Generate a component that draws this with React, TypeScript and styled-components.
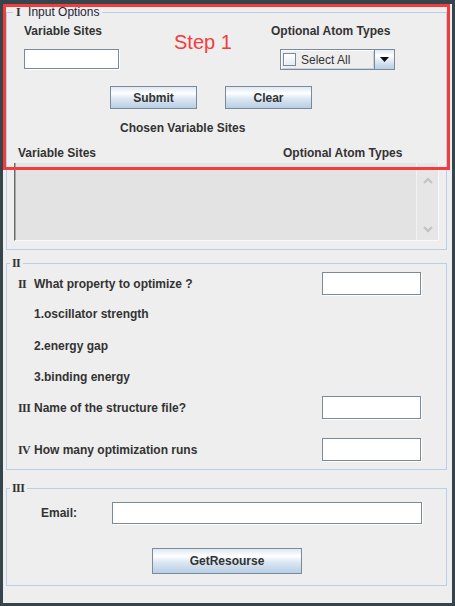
import React from "react";
import styled, { createGlobalStyle } from "styled-components";

const GlobalStyle = createGlobalStyle`
  html, body { margin: 0; padding: 0; background: #36444c; }
  body { font-family: "Liberation Sans", Arial, sans-serif; }
  * { box-sizing: border-box; }
`;

const Frame = styled.div`
  position: relative;
  width: 455px;
  height: 606px;
  padding: 4px 3px 3px 3px;
  background: #36444c;
`;

const Content = styled.div`
  width: 449px;
  height: 599px;
  background: #eeeeee;
  display: flex;
  flex-direction: column;
  padding: 1px 0 0 3px;
`;

const Panel = styled.fieldset<{ $mt: number; $pb: number }>`
  margin: ${(p) => p.$mt}px 0 0 0;
  padding: 0 0 ${(p) => p.$pb}px 0;
  width: 441px;
  min-width: 0;
  border: 1px solid #b8cfe5;
  display: flex;
  flex-direction: column;
`;

const Legend = styled.legend<{ $offset: number; $padLeft: number }>`
  height: 14px;
  margin-left: ${(p) => p.$offset}px;
  padding: 0 3px 0 ${(p) => p.$padLeft}px;
  font: 12px/14px "Liberation Sans", Arial, sans-serif;
  color: #24243a;
  white-space: nowrap;
`;

const Numeral = styled.span<{ $gap?: number }>`
  display: inline-block;
  vertical-align: top;
  height: 14px;
  font: bold 12px/14px "Liberation Serif", "Times New Roman", serif;
  letter-spacing: -0.6px;
  color: #333;
  margin-right: ${(p) => p.$gap ?? 0}px;
`;

const Label = styled.div<{ $indent?: number; $mt?: number }>`
  font: bold 12px/14px "Liberation Sans", Arial, sans-serif;
  color: #333;
  white-space: nowrap;
  padding-left: ${(p) => p.$indent ?? 0}px;
  margin-top: ${(p) => p.$mt ?? 0}px;
`;

const TextField = styled.input<{ $w: number; $h: number }>`
  width: ${(p) => p.$w}px;
  height: ${(p) => p.$h}px;
  margin: 0;
  padding: 0 3px;
  border: 1px solid #7a8a99;
  box-shadow: 1px 1px 0 #ffffff;
  background: #ffffff;
  outline: none;
  font: 12px "Liberation Sans", Arial, sans-serif;
`;

const MetalButton = styled.button<{ $w: number; $h: number }>`
  width: ${(p) => p.$w}px;
  height: ${(p) => p.$h}px;
  margin: 0;
  padding: 0;
  border: 1px solid #7a8a99;
  background: linear-gradient(
    to bottom,
    #dde8f3 0%,
    #ffffff 30%,
    #dce7f2 55%,
    #c4d6e9 85%,
    #b8cfe5 100%
  );
  font: bold 12px/14px "Liberation Sans", Arial, sans-serif;
  color: #333;
  cursor: pointer;
`;

/* ---------- Panel I ---------- */

const TopRow = styled.div`
  display: flex;
  align-items: flex-start;
  margin-top: 5px;
`;

const Column = styled.div<{ $ml: number; $w?: number }>`
  display: flex;
  flex-direction: column;
  margin-left: ${(p) => p.$ml}px;
  width: ${(p) => (p.$w ? `${p.$w}px` : "auto")};
`;

const FieldSlot = styled.div<{ $ml?: number }>`
  margin-top: 11px;
  margin-left: ${(p) => p.$ml ?? 0}px;
  display: flex;
`;

const StepLabel = styled.div`
  width: 97px;
  margin-top: 6px;
  font: 20px/24px "Liberation Sans", Arial, sans-serif;
  color: #f43c3c;
  white-space: nowrap;
`;

const Combo = styled.div`
  width: 115px;
  height: 21px;
  display: flex;
  border: 1px solid #7a8a99;
  background: #eeeeee;
`;

const ComboBody = styled.div`
  flex: 1;
  display: flex;
  align-items: center;
  padding-left: 2px;
  box-shadow: inset 1px 1px 0 #ffffff, inset -1px -1px 0 #c9d3dd;
`;

const CheckBox = styled.span`
  width: 13px;
  height: 13px;
  border: 1px solid #7a8a99;
  background: linear-gradient(to bottom, #ffffff 0%, #e4ecf4 100%);
  box-shadow: inset 1px 1px 0 #ffffff;
`;

const ComboText = styled.span`
  margin-left: 5px;
  font: 12px/14px "Liberation Sans", Arial, sans-serif;
  color: #333;
`;

const ComboArrow = styled.div`
  width: 20px;
  border-left: 1px solid #7a8a99;
  display: flex;
  align-items: center;
  justify-content: center;
  background: linear-gradient(to bottom, #dde8f3 0%, #ffffff 30%, #c4d6e9 85%, #b8cfe5 100%);
`;

const ButtonRow = styled.div<{ $mt: number; $pl: number; $gap?: number }>`
  display: flex;
  gap: ${(p) => p.$gap ?? 0}px;
  margin-top: ${(p) => p.$mt}px;
  padding-left: ${(p) => p.$pl}px;
`;

const SplitLabels = styled.div`
  display: grid;
  grid-template-columns: 265px auto;
  margin-top: 11px;
  padding-left: 11px;
`;

const ScrollPane = styled.div`
  display: flex;
  margin: 3px 0 0 7px;
  width: 425px;
  height: 78px;
  background: #e3e3e3;
  border-left: 1px solid #6a6a6a;
  border-right: 1px solid #f8f8f8;
  border-bottom: 1px solid #f8f8f8;
  box-shadow: inset 1px 0 0 #a8a8a8;
`;

const ScrollBody = styled.div`
  flex: 1;
`;

const ScrollBar = styled.div`
  width: 22px;
  display: flex;
  flex-direction: column;
  align-items: center;
  justify-content: space-between;
  padding: 14px 0 7px;
  background: #e6e6e6;
  border-left: 1px solid #f2f2f2;
`;

/* ---------- Panel II ---------- */

const QuestionRow = styled.div<{ $mt: number }>`
  display: grid;
  grid-template-columns: 16px 288px 99px;
  align-items: center;
  height: 23px;
  margin-top: ${(p) => p.$mt}px;
  padding-left: 11px;
`;

/* ---------- Panel III ---------- */

const EmailRow = styled.div`
  display: grid;
  grid-template-columns: 71px 310px;
  align-items: center;
  height: 22px;
  margin-top: 7px;
  padding-left: 34px;
`;

const RedOutline = styled.div`
  position: absolute;
  left: 3px;
  top: 4px;
  width: 447px;
  height: 166px;
  border: 3px solid #f43c3c;
  pointer-events: none;
`;

const Chevron = ({ up }: { up?: boolean }) => (
  <svg width="10" height="7" viewBox="0 0 10 7">
    <path
      d={up ? "M1 6 L5 2 L9 6" : "M1 1 L5 5 L9 1"}
      fill="none"
      stroke="#c2c2c2"
      strokeWidth="2"
    />
  </svg>
);

export default function App() {
  return (
    <>
      <GlobalStyle />
      <Frame>
        <Content>
          <Panel $mt={0} $pb={8}>
            <Legend $offset={6} $padLeft={3}>
              <Numeral $gap={8}>I</Numeral>Input Options
            </Legend>
            <TopRow>
              <Column $ml={17} $w={150}>
                <Label>Variable Sites</Label>
                <FieldSlot>
                  <TextField $w={95} $h={20} />
                </FieldSlot>
              </Column>
              <StepLabel>Step 1</StepLabel>
              <Column $ml={0}>
                <Label>Optional Atom Types</Label>
                <FieldSlot $ml={9}>
                  <Combo>
                    <ComboBody>
                      <CheckBox />
                      <ComboText>Select All</ComboText>
                    </ComboBody>
                    <ComboArrow>
                      <svg width="9" height="5" viewBox="0 0 9 5">
                        <path d="M0 0 H9 L4.5 5 Z" fill="#111" />
                      </svg>
                    </ComboArrow>
                  </Combo>
                </FieldSlot>
              </Column>
            </TopRow>
            <ButtonRow $mt={16} $pl={103} $gap={28}>
              <MetalButton $w={87} $h={23}>Submit</MetalButton>
              <MetalButton $w={87} $h={23}>Clear</MetalButton>
            </ButtonRow>
            <Label $indent={113} $mt={12}>
              Chosen Variable Sites
            </Label>
            <SplitLabels>
              <Label>Variable Sites</Label>
              <Label>Optional Atom Types</Label>
            </SplitLabels>
            <ScrollPane>
              <ScrollBody />
              <ScrollBar>
                <Chevron up />
                <Chevron />
              </ScrollBar>
            </ScrollPane>
          </Panel>

          <Panel $mt={6} $pb={8}>
            <Legend $offset={3} $padLeft={2}>
              <Numeral>II</Numeral>
            </Legend>
            <QuestionRow $mt={2}>
              <Numeral>II</Numeral>
              <Label>What property to optimize ?</Label>
              <TextField $w={99} $h={23} />
            </QuestionRow>
            <Label $indent={27} $mt={12}>
              1.oscillator strength
            </Label>
            <Label $indent={27} $mt={18}>
              2.energy gap
            </Label>
            <Label $indent={27} $mt={17}>
              3.binding energy
            </Label>
            <QuestionRow $mt={12}>
              <Numeral>III</Numeral>
              <Label>Name of the structure file?</Label>
              <TextField $w={99} $h={23} />
            </QuestionRow>
            <QuestionRow $mt={19}>
              <Numeral>IV</Numeral>
              <Label>How many optimization runs</Label>
              <TextField $w={99} $h={23} />
            </QuestionRow>
          </Panel>

          <Panel $mt={11} $pb={11}>
            <Legend $offset={3} $padLeft={2}>
              <Numeral>III</Numeral>
            </Legend>
            <EmailRow>
              <Label>Email:</Label>
              <TextField $w={310} $h={22} />
            </EmailRow>
            <ButtonRow $mt={24} $pl={145}>
              <MetalButton $w={150} $h={26}>GetResourse</MetalButton>
            </ButtonRow>
          </Panel>
        </Content>
        <RedOutline />
      </Frame>
    </>
  );
}
